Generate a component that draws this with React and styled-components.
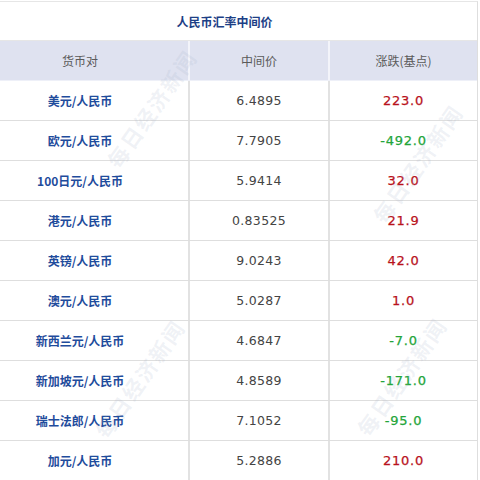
import React from "react";
import styled, { createGlobalStyle } from "styled-components";

const rates = [
  { pair: "美元/人民币", mid: "6.4895", change: "223.0" },
  { pair: "欧元/人民币", mid: "7.7905", change: "-492.0" },
  { pair: "100日元/人民币", mid: "5.9414", change: "32.0" },
  { pair: "港元/人民币", mid: "0.83525", change: "21.9" },
  { pair: "英镑/人民币", mid: "9.0243", change: "42.0" },
  { pair: "澳元/人民币", mid: "5.0287", change: "1.0" },
  { pair: "新西兰元/人民币", mid: "4.6847", change: "-7.0" },
  { pair: "新加坡元/人民币", mid: "4.8589", change: "-171.0" },
  { pair: "瑞士法郎/人民币", mid: "7.1052", change: "-95.0" },
  { pair: "加元/人民币", mid: "5.2886", change: "210.0" },
];

// faint diagonal "每日经济新闻" stamps lying over the table
const marks = [
  { left: 112, top: 150 },
  { left: 378, top: 205 },
  { left: 100, top: 420 },
  { left: 362, top: 418 },
];

const GlobalStyle = createGlobalStyle`
  body {
    margin: 0;
    background: #fff;
    overflow: hidden;
    font-family: "Noto Sans CJK SC", "Noto Sans", sans-serif;
  }
`;

const Page = styled.div`
  position: relative;
  width: 480px;
  height: 480px;
  overflow: hidden;
  padding-top: 1px;
  box-sizing: border-box;
`;

const Table = styled.div`
  margin-left: -28px;
  width: 505px;
  border-top: 1px solid #e6e6e6;
  border-right: 1px solid #dedede;
`;

const Title = styled.div`
  height: 38px;
  display: flex;
  align-items: center;
  justify-content: center;
  font-size: 12px;
  font-weight: 700;
  color: #1d3f86;
  border-bottom: 1px solid #e6e6e6;
`;

const Row = styled.div`
  display: grid;
  grid-template-columns: 216px 140px 1fr;
  height: 40px;
  background: ${(p) => (p.$head ? "#dfe2f0" : "#fff")};
  border-bottom: 1px solid ${(p) => (p.$head ? "#eef0f8" : "#dedede")};
  box-sizing: border-box;
`;

const Cell = styled.div`
  display: flex;
  align-items: center;
  justify-content: center;
  border-left: ${(p) => (p.$first ? "none" : "2px solid")};
  border-color: ${(p) => (p.$head ? "#f3f4fa" : "#e2e2e2")};
`;

const HeadText = styled.span`
  font-size: 12px;
  color: #5a5a5a;
`;

const Pair = styled.span`
  font-size: 12px;
  font-weight: 700;
  color: #1f4c9c;
`;

const Mid = styled.span`
  font-family: "DejaVu Sans", Verdana, sans-serif;
  font-size: 12.5px;
  color: #444;
  letter-spacing: 0.3px;
`;

const Change = styled.span`
  font-family: "DejaVu Sans", Verdana, sans-serif;
  font-size: 13px;
  letter-spacing: 0.8px;
  -webkit-text-stroke: 0.25px currentColor;
  color: ${(p) => (p.$down ? "#23a53a" : "#b8121c")};
`;

const Watermark = styled.div`
  position: absolute;
  transform: rotate(-55deg);
  transform-origin: left center;
  font-size: 21px;
  font-weight: 700;
  letter-spacing: 2px;
  color: rgba(165, 176, 200, 0.17);
  white-space: nowrap;
  pointer-events: none;
`;

export default function App() {
  return (
    <Page>
      <GlobalStyle />
      <Table>
        <Title>人民币汇率中间价</Title>
        <Row $head>
          <Cell $first $head>
            <HeadText>货币对</HeadText>
          </Cell>
          <Cell $head>
            <HeadText>中间价</HeadText>
          </Cell>
          <Cell $head>
            <HeadText>涨跌(基点)</HeadText>
          </Cell>
        </Row>
        {rates.map((r) => (
          <Row key={r.pair}>
            <Cell $first>
              <Pair>{r.pair}</Pair>
            </Cell>
            <Cell>
              <Mid>{r.mid}</Mid>
            </Cell>
            <Cell>
              <Change $down={r.change.startsWith("-")}>{r.change}</Change>
            </Cell>
          </Row>
        ))}
      </Table>
      {marks.map((m, i) => (
        <Watermark key={i} style={{ left: m.left, top: m.top }}>
          每日经济新闻
        </Watermark>
      ))}
    </Page>
  );
}
